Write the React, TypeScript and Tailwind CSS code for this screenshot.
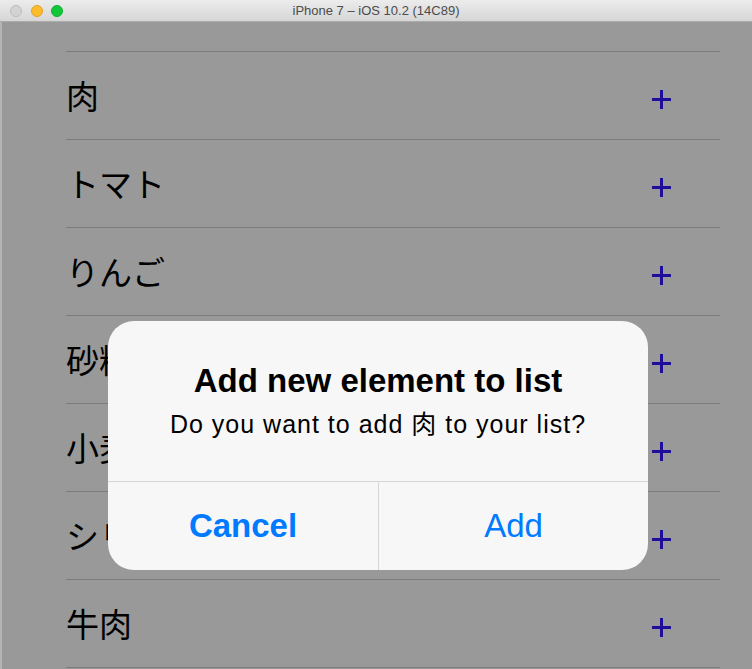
import React from 'react';

// Simulator window: dimmed shopping list with an iOS alert on top

const ITEMS = ['肉', 'トマト', 'りんご', '砂糖', '小麦粉', 'シリアル', '牛肉'];

const PlusIcon = () => (
  <svg width="19" height="19" viewBox="0 0 19 19" className="block">
    <path d="M9.5 0 V19 M0 9.5 H19" stroke="#1d0e9c" strokeWidth="3" />
  </svg>
);

export default function App() {
  return (
    <div
      className="relative w-[752px] h-[669px] overflow-hidden bg-[#999999]"
      style={{ fontFamily: '"Liberation Sans", "Noto Sans CJK JP", sans-serif' }}
    >
      {/* Title bar */}
      <div className="h-[22px] grid grid-cols-[1fr_auto_1fr] items-center border-b border-[#ababab] bg-gradient-to-b from-[#ececec] to-[#d6d6d6]">
        <div className="flex items-center gap-[8.5px] pl-[10px]">
          <span className="w-[12px] h-[12px] rounded-full bg-[#d3d3d3] border border-[#bdbdbd]" />
          <span className="w-[12px] h-[12px] rounded-full bg-[#fdbc2c] border border-[#e0a325]" />
          <span className="w-[12px] h-[12px] rounded-full bg-[#12c83a] border border-[#10ad30]" />
        </div>
        <div className="text-[13px] text-[#4b4b4b] leading-none">iPhone 7 – iOS 10.2 (14C89)</div>
        <div />
      </div>

      {/* List */}
      <div className="border-l-2 border-[#b4b4b4] h-full">
        <div className="pl-[64px] pr-[32px] pt-[29px]">
          {ITEMS.map((item) => (
            <div
              key={item}
              className="h-[88px] border-t border-[#7c7c7c] flex items-center justify-between pr-[49px]"
            >
              <span
                className="text-[33px] text-black leading-none"
                style={{ fontFamily: '"Noto Sans CJK JP", sans-serif' }}
              >
                {item}
              </span>
              <span className="mt-[7px]">
                <PlusIcon />
              </span>
            </div>
          ))}
          <div className="border-t border-[#7c7c7c]" />
        </div>
      </div>

      {/* Alert */}
      <div className="absolute left-[108px] top-[321px] w-[540px] h-[249px] rounded-[26px] bg-[#f7f7f7] overflow-hidden flex flex-col">
        <div className="h-[160px] pt-[40px] text-center text-black">
          <div className="text-[33px] font-bold leading-[40px]">Add new element to list</div>
          <div className="mt-[8px] text-[25px] leading-[30px] tracking-[1px]">
            Do you want to add 肉 to your list?
          </div>
        </div>
        <div className="flex-1 grid grid-cols-2 border-t border-[#d6d6d6] text-[#007aff] text-[33px]">
          <div className="flex items-center justify-center font-bold">Cancel</div>
          <div className="flex items-center justify-center border-l border-[#d6d6d6]">Add</div>
        </div>
      </div>
    </div>
  );
}
